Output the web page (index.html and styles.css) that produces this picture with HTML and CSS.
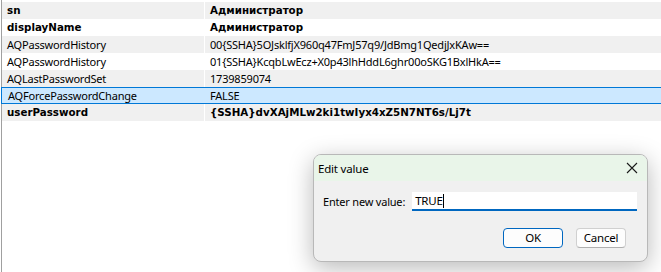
FILE: index.html
```html
<!DOCTYPE html>
<html lang="en">
<head>
    <meta charset="UTF-8">
    <title>Attributes</title>
    <link rel="stylesheet" href="styles.css">
</head>
<body>
    <div class="grid">
        <div class="row bold"><div class="name">sn</div><div class="value">Администратор</div></div>
        <div class="row bold"><div class="name">displayName</div><div class="value">Администратор</div></div>
        <div class="row"><div class="name">AQPasswordHistory</div><div class="value">00{SSHA}5OJsklfjX960q47FmJ57q9/JdBmg1QedjJxKAw==</div></div>
        <div class="row"><div class="name">AQPasswordHistory</div><div class="value">01{SSHA}KcqbLwEcz+X0p43lhHddL6ghr00oSKG1BxlHkA==</div></div>
        <div class="row"><div class="name">AQLastPasswordSet</div><div class="value">1739859074</div></div>
        <div class="row selected"><div class="name">AQForcePasswordChange</div><div class="value">FALSE</div></div>
        <div class="row bold"><div class="name">userPassword</div><div class="value">{SSHA}dvXAjMLw2ki1twIyx4xZ5N7NT6s/Lj7t</div></div>
    </div>

    <div class="dialog">
        <div class="title-bar">
            <span>Edit value</span>
            <svg class="close" width="12" height="12" viewBox="0 0 12 12">
                <path d="M1 1 L11 11 M11 1 L1 11" stroke="#1a1a1a" stroke-width="1.1" fill="none"/>
            </svg>
        </div>
        <div class="dialog-body">
            <div class="field">
                <label for="newValue">Enter new value:</label>
                <div class="input" id="newValue">TRUE<span class="caret"></span></div>
            </div>
            <div class="buttons">
                <button class="btn default">OK</button>
                <button class="btn cancel">Cancel</button>
            </div>
        </div>
    </div>
</body>
</html>
```

FILE: styles.css
```css
body {
    margin: 0;
    padding: 0;
    background-color: #ffffff;
    font-family: "Noto Sans", "Open Sans", sans-serif;
    font-size: 11px;
    letter-spacing: -0.2px;
    color: #000000;
    width: 661px;
    height: 272px;
    overflow: hidden;
}

.grid {
    padding-top: 2px;
    height: 270px;
    margin-left: 1px;
    border-left: 1px solid #a0a0a0;
}

.row {
    display: grid;
    grid-template-columns: 202px 1fr;
    column-gap: 1px;
    height: 17px;
    line-height: 17px;
    white-space: nowrap;
}

.row .name, .row .value {
    padding-left: 5px;
    overflow: hidden;
}

.row:nth-child(odd) .name,
.row:nth-child(odd) .value {
    background-color: #f0f0f0;
}

.row.bold {
    font-family: "DejaVu Sans", sans-serif;
    font-weight: bold;
    font-size: 10.3px;
    letter-spacing: 0;
}

.row.selected {
    background-color: #cce8ff;
    border-top: 1px solid #0078d7;
    border-bottom: 1px solid #0078d7;
    border-left: 1px solid #0078d7;
    margin-left: -1px;
    box-sizing: border-box;
    line-height: 15px;
}

.row.selected .name {
    padding-left: 6px;
}

.row.selected .name, .row.selected .value {
    background-color: transparent;
}

.dialog {
    position: absolute;
    left: 313px;
    top: 154px;
    width: 335px;
    height: 108px;
    box-sizing: border-box;
    background-color: #f0f0f0;
    border: 1px solid #b8b8b8;
    border-radius: 8px;
    box-shadow: 0 6px 24px rgba(0, 0, 0, 0.28);
    overflow: hidden;
}

.title-bar {
    display: flex;
    justify-content: space-between;
    align-items: center;
    height: 26px;
    padding: 0 9px 0 4px;
    background-color: #e9f5e9;
    font-size: 11.5px;
}

.dialog-body {
    padding: 11px 10px 0 9px;
}

.field {
    display: flex;
    align-items: center;
    gap: 7px;
}

.field label {
    white-space: nowrap;
    flex-shrink: 0;
}

.input {
    flex: 1;
    height: 19px;
    box-sizing: border-box;
    background-color: #ffffff;
    border-bottom: 2px solid #0067c0;
    padding-left: 3px;
    display: flex;
    align-items: center;
    font-size: 11.5px;
}

.caret {
    display: inline-block;
    width: 1px;
    height: 14px;
    background-color: #000000;
}

.buttons {
    display: flex;
    justify-content: flex-end;
    gap: 13px;
    margin-top: 17px;
    padding-right: 11px;
}

.btn {
    width: 60px;
    height: 20px;
    font-family: "Noto Sans", sans-serif;
    font-size: 11.5px;
    letter-spacing: -0.2px;
    background-color: #fdfdfd;
    border: 1px solid #d0d0d0;
    border-bottom-color: #b0b0b0;
    border-radius: 4px;
    padding: 0;
    line-height: 16px;
}

.btn.cancel {
    width: 50px;
}

.btn.default {
    border: 1px solid #0067c0;
}
```
